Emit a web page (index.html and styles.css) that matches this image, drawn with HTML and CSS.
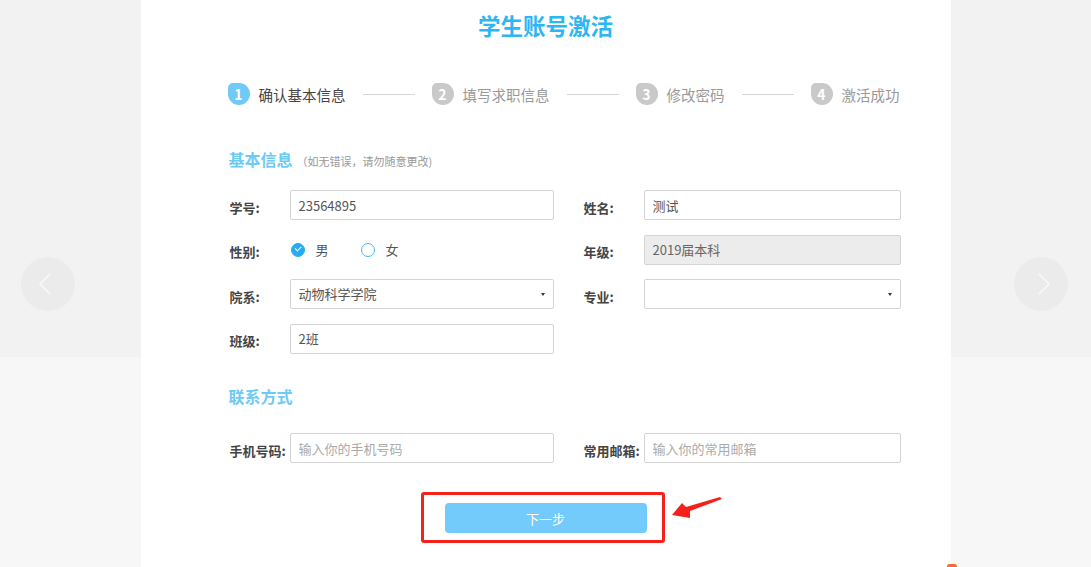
FILE: index.html
```html
<!DOCTYPE html>
<html lang="zh-CN">
<head>
    <meta charset="UTF-8">
    <meta name="viewport" content="width=device-width, initial-scale=1.0">
    <title>学生账号激活</title>
    <link rel="stylesheet" href="styles.css">
</head>
<body>
    <a class="slide-arrow slide-prev" href="#">
        <svg width="12" height="22" viewBox="0 0 12 22"><polyline points="11,1 1,11 11,21" fill="none" stroke="#f9f9f9" stroke-width="1.5"/></svg>
    </a>
    <a class="slide-arrow slide-next" href="#">
        <svg width="12" height="22" viewBox="0 0 12 22"><polyline points="1,1 11,11 1,21" fill="none" stroke="#f9f9f9" stroke-width="1.5"/></svg>
    </a>

    <div class="panel">
        <h1 class="title">学生账号激活</h1>

        <div class="steps">
            <div class="step active"><span class="num">1</span><span class="step-text">确认基本信息</span></div>
            <span class="step-line"></span>
            <div class="step"><span class="num">2</span><span class="step-text">填写求职信息</span></div>
            <span class="step-line"></span>
            <div class="step"><span class="num">3</span><span class="step-text">修改密码</span></div>
            <span class="step-line"></span>
            <div class="step"><span class="num">4</span><span class="step-text">激活成功</span></div>
        </div>

        <h2 class="section-head">基本信息<small>（如无错误，请勿随意更改)</small></h2>

        <div class="form-grid">
            <div class="field">
                <label>学号:</label>
                <input class="input" type="text" value="23564895">
            </div>
            <div class="field">
                <label>姓名:</label>
                <input class="input" type="text" value="测试">
            </div>

            <div class="field">
                <label>性别:</label>
                <div class="radios">
                    <span class="radio checked"><i></i>男</span>
                    <span class="radio"><i></i>女</span>
                </div>
            </div>
            <div class="field">
                <label>年级:</label>
                <input class="input" type="text" value="2019届本科" disabled>
            </div>

            <div class="field">
                <label>院系:</label>
                <div class="select">动物科学学院</div>
            </div>
            <div class="field">
                <label>专业:</label>
                <div class="select"></div>
            </div>

            <div class="field">
                <label>班级:</label>
                <input class="input" type="text" value="2班">
            </div>
        </div>

        <h2 class="section-head contact">联系方式</h2>

        <div class="form-grid">
            <div class="field">
                <label>手机号码:</label>
                <input class="input" type="text" placeholder="输入你的手机号码">
            </div>
            <div class="field">
                <label>常用邮箱:</label>
                <input class="input" type="text" placeholder="输入你的常用邮箱">
            </div>
        </div>

        <div class="actions">
            <button class="next-btn" type="button">下一步</button>
            <span class="mark-box"></span>
            <svg class="mark-arrow" width="56" height="26" viewBox="0 0 56 26">
                <polygon points="2,20 12,8 16,12 50,2 52,4 20,16 20,23" fill="#f5211b"/>
            </svg>
        </div>
    </div>

    <span class="corner-mark"></span>
</body>
</html>
```

FILE: styles.css
```css
body {
    margin: 0;
    height: 567px;
    overflow: hidden;
    position: relative;
    font-family: "Noto Sans CJK SC", "Microsoft YaHei", sans-serif;
    color: #333;
    background: linear-gradient(#f2f2f2 0, #f2f2f2 357px, #f7f7f7 357px);
}

.panel {
    width: 810px;
    height: 567px;
    margin: 0 auto;
    background: #fff;
    box-sizing: border-box;
    padding: 0 0 0 89px;
}

.title {
    margin: 0 0 0 -89px;
    padding-top: 10px;
    line-height: 30px;
    font-size: 22.5px;
    font-weight: bold;
    text-align: center;
    color: #2cb6f4;
}

/* steps */
.steps {
    display: flex;
    align-items: center;
    height: 24px;
    margin: 42px 0 0 -2px;
}

.step {
    display: flex;
    align-items: center;
    gap: 9px;
    font-size: 14.5px;
    color: #999;
}

.step .num {
    width: 22px;
    height: 22px;
    line-height: 22px;
    border-radius: 5px 50% 50% 50%;
    background: #c9c9c9;
    color: #fff;
    text-align: center;
    font-size: 14px;
    font-weight: bold;
}

.step.active { color: #444; }
.step.active .num { background: #6fcaf7; }

.step-line {
    width: 52px;
    height: 1px;
    margin: 0 17px;
    background: #d6d6d6;
}

/* sections */
.section-head {
    margin: 43px 0 0 -1px;
    line-height: 20px;
    font-size: 16px;
    font-weight: bold;
    color: #6ccaf6;
}

.section-head small {
    font-size: 11px;
    font-weight: normal;
    color: #999;
    margin-left: 4px;
}

.section-head.contact { margin-top: 32px; }

.form-grid {
    display: grid;
    grid-template-columns: 324px 317px;
    column-gap: 30px;
    row-gap: 14.5px;
    margin-top: 19px;
}

.contact + .form-grid { margin-top: 27.5px; }

.field {
    display: flex;
    align-items: center;
    height: 30px;
}

.field label {
    width: 60px;
    flex: none;
    font-size: 13px;
    font-weight: bold;
    color: #444;
    padding-top: 4px;
}

.input, .select {
    flex: 1;
    height: 30px;
    box-sizing: border-box;
    border: 1px solid #d4d4d4;
    border-radius: 2px;
    padding: 0 8px;
    font-family: inherit;
    font-size: 13px;
    color: #555;
    background: #fff;
    outline: none;
}

.input::placeholder { color: #aaa; }

.input:disabled {
    background: #ececec;
    color: #666;
}

.select {
    position: relative;
    line-height: 28px;
}

.select::after {
    content: "";
    position: absolute;
    right: 8px;
    top: 13px;
    border-left: 2.5px solid transparent;
    border-right: 2.5px solid transparent;
    border-top: 3px solid #333;
}

.radios {
    display: flex;
    gap: 32px;
    padding-left: 1px;
}

.radio {
    display: flex;
    align-items: center;
    gap: 11px;
    font-size: 13px;
    color: #555;
}

.radio i {
    width: 14px;
    height: 14px;
    box-sizing: border-box;
    border-radius: 50%;
    border: 1.5px solid #44b8f2;
    background: #fff;
    position: relative;
}

.radio.checked i {
    background: #29aaf1;
    border-color: #29aaf1;
}

.radio.checked i::after {
    content: "";
    position: absolute;
    left: 3px;
    top: 2.5px;
    width: 5px;
    height: 2.5px;
    border-left: 1.5px solid #fff;
    border-bottom: 1.5px solid #fff;
    transform: rotate(-45deg);
}

/* next step */
.actions {
    position: relative;
    margin: 40px 0 0 -89px;
    height: 30px;
    display: flex;
    justify-content: center;
}

.next-btn {
    width: 202px;
    height: 30px;
    border: none;
    border-radius: 4px;
    background: #72cbfb;
    color: #fff;
    font-family: inherit;
    font-size: 13px;
    cursor: pointer;
}

.mark-box {
    position: absolute;
    left: 280px;
    top: -11px;
    width: 244px;
    height: 51px;
    box-sizing: border-box;
    border: 3px solid #f5211b;
    border-radius: 3px;
}

.mark-arrow {
    position: absolute;
    left: 529px;
    top: -8px;
}

/* carousel arrows */
.slide-arrow {
    position: absolute;
    top: 257px;
    width: 54px;
    height: 54px;
    border-radius: 50%;
    background: #ebebeb;
    display: flex;
    align-items: center;
    justify-content: center;
}

.slide-prev { left: 21px; }
.slide-prev svg { margin-left: -6px; }
.slide-next { left: 1014px; }
.slide-next svg { margin-left: 6px; }

.corner-mark {
    position: absolute;
    left: 947px;
    top: 564px;
    width: 10px;
    height: 5px;
    border-radius: 4px;
    background: #f76a3a;
}
```
